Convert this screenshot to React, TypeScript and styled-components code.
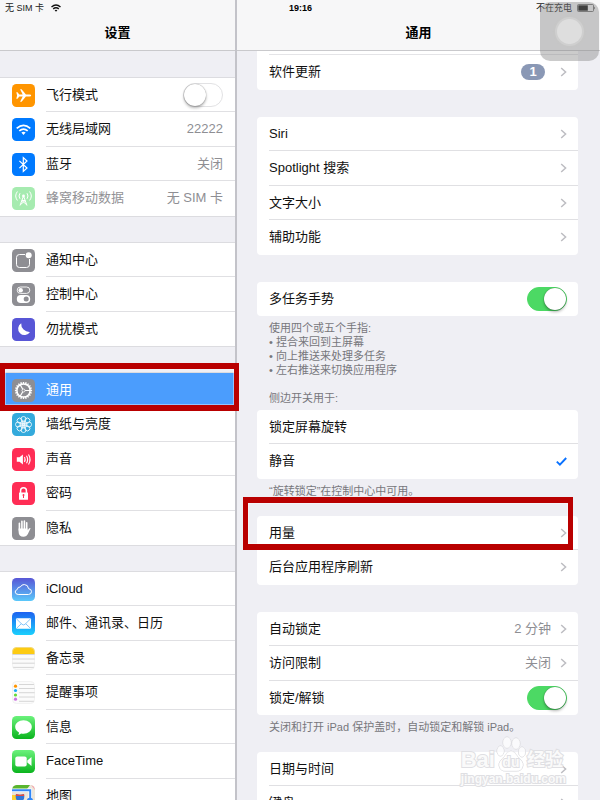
import React from "react";
import styled, { createGlobalStyle, css } from "styled-components";

const GlobalStyle = createGlobalStyle`
  *, *::before, *::after { box-sizing: border-box; }
  body {
    margin: 0;
    background: #efeff4;
    color: #111;
    font-family: "Liberation Sans", "Noto Sans CJK SC", sans-serif;
    font-size: 13px;
    line-height: 20px;
  }
`;

const Page = styled.div`
  position: relative;
  display: flex;
  flex-direction: column;
  height: 100vh;
  overflow: hidden;
`;

const StatusBar = styled.header`
  display: grid;
  grid-template-columns: 1fr auto 1fr;
  align-items: center;
  height: 16px;
  flex: none;
  padding: 0 4px 0 5px;
  font-size: 9px;
  line-height: 16px;
  color: #222;
  background: linear-gradient(#c3c3c9, #c3c3c9) calc(100% * 47 / 120 + 1px) 0 / 2px 100% no-repeat #f7f7f8;
`;

const StatusGroup = styled.div<{ $end?: boolean }>`
  display: flex;
  align-items: center;
  gap: ${(p) => (p.$end ? 5 : 7)}px;
  justify-content: ${(p) => (p.$end ? "flex-end" : "flex-start")};
`;

const Clock = styled.time`
  font-weight: 700;
  color: #000;
`;

const Columns = styled.div`
  display: grid;
  grid-template-columns: minmax(0, 47fr) minmax(0, 73fr);
  flex: 1;
  min-height: 0;
`;

const Column = styled.div<{ $divided?: boolean }>`
  display: flex;
  flex-direction: column;
  min-height: 0;
  ${(p) => p.$divided && css`border-left: 2px solid #c3c3c9;`}
`;

const Title = styled.h1`
  flex: none;
  height: 35px;
  margin: 0;
  border-bottom: 1px solid #c9c9cc;
  background: #f7f7f8;
  color: #000;
  font-size: 13px;
  font-weight: 700;
  line-height: 34px;
  text-align: center;
`;

const Scroller = styled.div<{ $inset?: boolean }>`
  flex: 1;
  min-height: 0;
  overflow-y: auto;
  scrollbar-width: none;
  padding: ${(p) => (p.$inset ? "0 22px 0 20px" : "27px 0 0")};
`;

const Group = styled.ul<{ $card?: boolean; $gap?: number; $open?: boolean }>`
  list-style: none;
  margin: 0 0 ${(p) => p.$gap ?? 27}px;
  padding: 0;
  background: #fff;
  ${(p) =>
    p.$card
      ? css`border-radius: ${p.$open ? "0 0 4px 4px" : "4px"}; overflow: hidden;`
      : css`box-shadow: 0 -1px 0 #dcdce0, 0 1px 0 #dcdce0;`}
`;

const Item = styled.li`
  height: 34px;
  &:nth-child(even) { height: 35px; }
  &:last-child > * > *:last-child { border-bottom-color: transparent; }
`;

const Slice = styled.li`
  height: 4px;
  margin-left: 12px;
  border-bottom: 1px solid #e4e4e7;
`;

const rowBase = css`
  display: flex;
  height: 100%;
  padding-left: 12px;
  color: inherit;
  text-decoration: none;
  cursor: pointer;
`;

const RowLink = styled.a<{ $active?: boolean; $dim?: boolean }>`
  ${rowBase}
  ${(p) => p.$active && css`background: #4b9dfd; color: #fff;`}
  ${(p) => p.$dim && css`color: #929296;`}
`;

const RowLabel = styled.label`
  ${rowBase}
`;

const IconBox = styled.span`
  display: flex;
  align-items: center;
  flex: none;
  width: 34px;
  svg { display: block; }
`;

const RowBody = styled.span<{ $card?: boolean; $plain?: boolean }>`
  display: flex;
  align-items: center;
  flex: 1;
  min-width: 0;
  padding-right: ${(p) => (p.$card ? 11 : 12)}px;
  border-bottom: 1px solid ${(p) => (p.$plain ? "transparent" : "#e0e0e3")};
  white-space: nowrap;
`;

const Text = styled.span`
  flex: 1;
`;

const Value = styled.span`
  color: #8e8e93;
`;

const Badge = styled.span`
  width: 24px;
  margin-right: 6px;
  border-radius: 8px;
  background: #8a98b5;
  color: #fff;
  font-size: 13px;
  font-weight: 700;
  line-height: 16px;
  text-align: center;
`;

const ChevronIcon = styled.svg`
  display: block;
  flex: none;
  margin-left: 9px;
`;

const Switch = styled.input`
  appearance: none;
  position: relative;
  flex: none;
  width: 40px;
  height: 24px;
  margin: 0;
  border: 1px solid #e2e2e4;
  border-radius: 12px;
  background: #fff;
  cursor: pointer;
  &::after {
    content: "";
    position: absolute;
    top: 0;
    left: 0;
    width: 22px;
    height: 22px;
    border-radius: 50%;
    background: #fff;
    box-shadow: 0 0 1px rgba(0, 0, 0, 0.5), 0 2px 3px rgba(0, 0, 0, 0.3);
  }
  &:checked {
    border-color: #4cd964;
    background: #4cd964;
  }
  &:checked::after { left: 16px; }
`;

const HiddenRadio = styled.input`
  appearance: none;
  width: 0;
  height: 0;
  margin: 0;
  & + svg { visibility: hidden; }
  &:checked + svg { visibility: visible; }
`;

const Note = styled.p<{ $gap?: number }>`
  margin: 0 12px ${(p) => p.$gap ?? 18}px;
  padding-top: 5px;
  color: #77777c;
  font-size: 11px;
  line-height: 14px;
  white-space: pre-line;
`;

const GroupHeading = styled.h2`
  margin: 0 12px 5px;
  color: #77777c;
  font-size: 11px;
  font-weight: 400;
  line-height: 14px;
`;

const Highlight = styled.div<{ $x: number; $y: number; $w: number; $h: number }>`
  position: absolute;
  left: ${(p) => p.$x}px;
  top: ${(p) => p.$y}px;
  width: ${(p) => p.$w}px;
  height: ${(p) => p.$h}px;
  border: 6px solid #b90000;
  border-left-width: 5px;
  border-right-width: 5px;
  box-shadow: inset 0 0 0 1px rgba(255, 255, 255, 0.4);
  pointer-events: none;
`;

const AssistiveTouch = styled.button`
  position: absolute;
  top: 2px;
  right: 1px;
  display: grid;
  place-items: center;
  width: 59px;
  height: 59px;
  padding: 0;
  border: 0;
  border-radius: 10px;
  background: rgba(130, 130, 130, 0.42);
  &::before {
    content: "";
    width: 25px;
    height: 25px;
    border-radius: 50%;
    background: #dedede;
    box-shadow: 0 0 0 2px #cfcfcf, 0 0 0 4px #c6c6c6;
  }
`;

const Watermark = styled.div`
  position: absolute;
  right: 34px;
  bottom: 14px;
  color: #fafafa;
  font-weight: 700;
  pointer-events: none;
  -webkit-text-stroke: 2px #dfdfe3;
  paint-order: stroke fill;
`;

const Brand = styled.div`
  display: flex;
  align-items: flex-end;
  font-size: 22px;
  line-height: 24px;
`;

const Paw = styled.span`
  display: grid;
  width: 32px;
  height: 36px;
  svg { grid-area: 1 / 1; }
  span {
    grid-area: 1 / 1;
    place-self: end center;
    font-size: 14px;
    line-height: 20px;
  }
`;

const BrandChinese = styled.span`
  font-size: 18px;
`;

const Site = styled.div`
  font-size: 12px;
  line-height: 14px;
  text-align: center;
`;

const Chevron = () => (
  <ChevronIcon width="7" height="10" viewBox="0 0 7 10" aria-hidden="true">
    <path d="M1.2 1 5.6 5 1.2 9" fill="none" stroke="#bdbdc2" strokeWidth="1.5" />
  </ChevronIcon>
);

const Wifi = () => (
  <svg width="10" height="8" viewBox="0 0 10 8" aria-label="Wi-Fi">
    <g fill="none" stroke="#111" strokeWidth="1.4">
      <path d="M.5 3Q5-1 9.500 3" />
      <path d="M2.200 4.900Q5 2.500 7.800 4.900" />
    </g>
    <path d="M3.600 6.200Q5 5.100 6.400 6.200L5 7.800z" fill="#111" />
  </svg>
);

const Battery = () => (
  <svg width="19" height="8" viewBox="0 0 19 8" aria-label="电池">
    <rect x=".5" y=".5" width="16" height="7" rx="1" fill="none" stroke="#555" strokeWidth=".8" />
    <rect x="1.300" y="1.300" width="9.500" height="5.400" fill="#111" />
    <path d="M17.300 2.500q1.500 1.500 0 3z" fill="#222" />
  </svg>
);

const Check = () => (
  <svg width="11" height="9" viewBox="0 0 11 9" aria-hidden="true">
    <path d="M.8 4.600 3.900 7.600 10.200 1" fill="none" stroke="#0a72ff" strokeWidth="1.900" />
  </svg>
);

const spokes = (n: number) => Array.from({ length: n }, (_, i) => (360 / n) * i);

const glyphs: Record<string, { fill: string; art: React.ReactNode }> = {
  plane: {
    fill: "#ff9500",
    art: (
      <path
        fill="#fff"
        d="M4.300 8.200h1.200l1.800 2.300h3.400L8.100 5.200h1.500l4.300 5.300h3.600q1.700.2 1.700 1t-1.700 1h-3.600l-4.300 5.300H8.100l2.600-5.300H7.300l-1.800 2.300H4.300l.8-3.300z"
      />
    ),
  },
  wifi: {
    fill: "#007aff",
    art: (
      <g fill="none" stroke="#fff" strokeWidth="1.700">
        <path d="M4.700 10.300Q11.500 4.500 18.300 10.300" />
        <path d="M7.300 12.900Q11.500 9.300 15.700 12.900" />
        <path d="M9.400 14.600Q11.500 13 13.600 14.600L11.500 17z" fill="#fff" stroke="none" />
      </g>
    ),
  },
  bluetooth: {
    fill: "#007aff",
    art: <path d="M7.400 7.900 15 15l-3.700 3.400V4.600L15 8l-7.600 7.100" fill="none" stroke="#fff" strokeWidth="1.200" />,
  },
  cellular: {
    fill: "#a6ebb0",
    art: (
      <g fill="none" stroke="#fff" strokeWidth="1">
        <path d="M5.400 4.500q-3.400 4.500 0 9M8 6.200q-2 2.800 0 5.600M17.600 4.500q3.400 4.500 0 9M15 6.200q2 2.800 0 5.600" />
        <path d="M11.500 9 8 18.500M11.500 9 15 18.500M9.800 13.500h3.400l-4.600 4M9.800 13.500l4.600 4" />
        <circle cx="11.500" cy="9" r="1.400" fill="#fff" stroke="none" />
      </g>
    ),
  },
  notices: {
    fill: "#8e8e93",
    art: (
      <>
        <path d="M13 5.500H7.500q-3 0-3 3v7q0 3 3 3h7q3 0 3-3V10" fill="none" stroke="#fff" strokeWidth="1" />
        <circle cx="16.700" cy="6.300" r="3" fill="#fff" />
      </>
    ),
  },
  control: {
    fill: "#8e8e93",
    art: (
      <>
        <rect x="5.200" y="4" width="12.600" height="6.400" rx="3.200" fill="none" stroke="#fff" strokeWidth=".9" />
        <circle cx="8.700" cy="7.200" r="2.200" fill="#fff" />
        <rect x="4.800" y="12" width="13.400" height="8" rx="4" fill="#fff" />
        <circle cx="14.200" cy="16" r="2.500" fill="#8e8e93" />
      </>
    ),
  },
  moon: {
    fill: "#5856d6",
    art: <path fill="#fff" d="M9.200 5.200a6.400 6.400 0 1 0 8.800 8.800A8.200 8.200 0 0 1 9.200 5.200z" />,
  },
  gear: {
    fill: "#8e8e93",
    art: (
      <g fill="none" stroke="#fff">
        <circle cx="11.500" cy="11.500" r="6.600" strokeWidth="1.500" />
        {spokes(20).map((a) => (
          <path key={a} d="M11.500 2.900v2" strokeWidth="1.400" transform={`rotate(${a} 11.500 11.500)`} />
        ))}
        {[90, 210, 330].map((a) => (
          <path key={a} d="M11.500 11.500V5" strokeWidth="1.100" transform={`rotate(${a} 11.500 11.500)`} />
        ))}
        <circle cx="11.500" cy="11.500" r="1.500" fill="#8e8e93" strokeWidth=".8" />
      </g>
    ),
  },
  flower: {
    fill: "#34aadc",
    art: (
      <g fill="none" stroke="#fff" strokeWidth=".8">
        {spokes(8).map((a) => (
          <g key={a} transform={`rotate(${a} 11.500 11.500)`}>
            <circle cx="11.500" cy="6" r="2.500" />
            <ellipse cx="11.500" cy="9.400" rx="1.100" ry="1.500" strokeWidth=".6" />
          </g>
        ))}
        <circle cx="11.500" cy="11.500" r="1.500" />
      </g>
    ),
  },
  sound: {
    fill: "#ff2d55",
    art: (
      <g fill="none" stroke="#fff" strokeWidth="1.100">
        <path d="M4.800 9.200h2.700l3.400-2.600v9.800l-3.400-2.600H4.800z" fill="#fff" stroke="none" />
        <path d="M12.500 9q1.300 2.500 0 5M14.500 7.700q2.200 3.800 0 7.600M16.500 6.500q3.100 5 0 10" />
      </g>
    ),
  },
  lock: {
    fill: "#ff2d55",
    art: (
      <>
        <path d="M8.600 11V8.600q0-2.800 2.900-2.800t2.900 2.800V11" fill="none" stroke="#fff" strokeWidth="1.500" />
        <rect x="7" y="10.500" width="9" height="7.300" rx=".5" fill="#fff" />
        <path d="M11.500 12a1.100 1.100 0 0 1 .5 2v2h-1v-2a1.100 1.100 0 0 1 .5-2z" fill="#ff2d55" />
      </>
    ),
  },
  hand: {
    fill: "#8e8e93",
    art: (
      <g fill="none" stroke="#fff" strokeLinecap="round">
        <path d="M7.400 6.200v7M9.900 4.400v8M12.400 4.100v8M14.700 5.800v8" strokeWidth="1.600" />
        <path d="M6.600 11.500h8.900v1.900l1.500-2q1-.9 1.600-.2l-2.500 5.300q-1.600 3.300-4.500 3.300-5 0-5-5z" fill="#fff" stroke="none" />
      </g>
    ),
  },
  cloud: {
    fill: "url(#cloud-sky)",
    art: (
      <path
        d="M6.200 16.500h10.300q3-.3 3-2.900t-2.900-2.900q-.4-4-4.300-4.200-2.800 0-4 2.500-2.800-.3-2.900 2.400-2.300.8-2.200 2.700.3 2.200 3 2.400z"
        fill="none"
        stroke="#fff"
        strokeWidth="1"
      />
    ),
  },
  mail: {
    fill: "url(#mail-sky)",
    art: (
      <>
        <rect x="4" y="6.300" width="15" height="10.500" rx="1" fill="#fff" />
        <path d="M4.300 6.700 10 12.300q1.500 1.300 3 0l5.700-5.600M4.500 16.400l4.800-4.700M18.500 16.400l-4.800-4.700" fill="none" stroke="#66b8f8" strokeWidth=".8" />
      </>
    ),
  },
  notes: {
    fill: "#fbfbfb",
    art: (
      <>
        <path d="M0 7V5q0-5 5-5h13q5 0 5 5v2z" fill="#fdcb12" />
        <path d="M0 7.500h23M0 12h23M0 16.200h23M1 20.400h21" stroke="#d6d6d6" />
      </>
    ),
  },
  reminders: {
    fill: "#fbfbfb",
    art: (
      <>
        <path d="M7 3.500h15M7 7.500h16M7 11.700h16M7 16h16M7 20.300h15" stroke="#d6d6d6" />
        <circle cx="3.500" cy="5.200" r="1.600" fill="#ff9500" />
        <circle cx="3.500" cy="9.500" r="1.600" fill="#1badf8" />
        <circle cx="3.500" cy="14" r="1.600" fill="#63da38" />
        <circle cx="3.500" cy="18.200" r="1.600" fill="#cc73e1" />
      </>
    ),
  },
  messages: {
    fill: "url(#leaf)",
    art: (
      <path
        fill="#fff"
        d="M11.500 4.300c4.700 0 8.300 3 8.300 6.700s-3.600 6.700-8.300 6.700q-1.300 0-2.400-.2-1.300 1.200-3.100 1.300 1.100-1.100 1-2.300Q3.200 14.400 3.200 11c0-3.700 3.600-6.700 8.300-6.700z"
      />
    ),
  },
  facetime: {
    fill: "url(#leaf)",
    art: (
      <>
        <rect x="3.300" y="6.400" width="11.400" height="10.200" rx="2" fill="#fff" />
        <path d="M15.300 10.600 19.500 7v9l-4.200-3.600z" fill="#fff" />
      </>
    ),
  },
  maps: {
    fill: "#ece6da",
    art: (
      <>
        <path d="M0 4.500Q.5 0 5 0h13l-3 4z" fill="#59b52e" />
        <path d="M19 0q4 1 4 5z" fill="#f5a0aa" />
        <path d="M0 10h9l4 13H5q-5 0-5-5z" fill="#fcd232" />
        <path d="M0 5.300h18.200V23" fill="none" stroke="#fff" strokeWidth="3.400" />
        <path d="M0 5.300h18.200V15" fill="none" stroke="#2f86f6" strokeWidth="2" />
        <path d="M4 9q4 1.500 8 0 1.500 6-4 9-5.500-3-4-9z" fill="#2f77d8" />
        <path d="M4 9q4 1.500 8 0l.2 2H3.800z" fill="#e84b3c" />
        <circle cx="18" cy="16" r="3.200" fill="#2f86f6" />
      </>
    ),
  },
};

const Glyph = ({ name }: { name: string }) => (
  <svg width="23" height="23" viewBox="0 0 23 23" aria-hidden="true">
    <defs>
      <linearGradient id="cloud-sky" x2="0" y2="1">
        <stop stopColor="#5856d6" />
        <stop offset="1" stopColor="#5ac8fa" />
      </linearGradient>
      <linearGradient id="mail-sky" x2="0" y2="1">
        <stop stopColor="#1d62f0" />
        <stop offset="1" stopColor="#1ad0fd" />
      </linearGradient>
      <linearGradient id="leaf" x2="0" y2="1">
        <stop stopColor="#6bf27c" />
        <stop offset="1" stopColor="#0bb41e" />
      </linearGradient>
      <clipPath id="tile">
        <rect width="23" height="23" rx="4.500" />
      </clipPath>
    </defs>
    <g clipPath="url(#tile)">
      <rect width="23" height="23" fill={glyphs[name].fill} />
      {glyphs[name].art}
    </g>
    {(name === "notes" || name === "reminders") && (
      <rect x=".5" y=".5" width="22" height="22" rx="4" fill="none" stroke="#e9e9e9" strokeWidth=".5" />
    )}
  </svg>
);

type NavEntry = { icon: string; label: string; value?: string; toggle?: boolean; active?: boolean; dim?: boolean };

const navigation: NavEntry[][] = [
  [
    { icon: "plane", label: "飞行模式", toggle: true },
    { icon: "wifi", label: "无线局域网", value: "22222" },
    { icon: "bluetooth", label: "蓝牙", value: "关闭" },
    { icon: "cellular", label: "蜂窝移动数据", value: "无 SIM 卡", dim: true },
  ],
  [
    { icon: "notices", label: "通知中心" },
    { icon: "control", label: "控制中心" },
    { icon: "moon", label: "勿扰模式" },
  ],
  [
    { icon: "gear", label: "通用", active: true },
    { icon: "flower", label: "墙纸与亮度" },
    { icon: "sound", label: "声音" },
    { icon: "lock", label: "密码" },
    { icon: "hand", label: "隐私" },
  ],
  [
    { icon: "cloud", label: "iCloud" },
    { icon: "mail", label: "邮件、通讯录、日历" },
    { icon: "notes", label: "备忘录" },
    { icon: "reminders", label: "提醒事项" },
    { icon: "messages", label: "信息" },
    { icon: "facetime", label: "FaceTime" },
    { icon: "maps", label: "地图" },
  ],
];

const NavRow = ({ icon, label, value, toggle, active, dim }: NavEntry) => {
  const content = (
    <>
      <IconBox>
        <Glyph name={icon} />
      </IconBox>
      <RowBody $plain={active}>
        <Text>{label}</Text>
        {value && <Value>{value}</Value>}
        {toggle && <Switch type="checkbox" />}
      </RowBody>
    </>
  );
  return (
    <Item>
      {toggle ? (
        <RowLabel>{content}</RowLabel>
      ) : (
        <RowLink href="#" $active={active} $dim={dim} aria-current={active ? "page" : undefined}>
          {content}
        </RowLink>
      )}
    </Item>
  );
};

const DetailRow = ({ label, value, badge }: { label: string; value?: string; badge?: string }) => (
  <Item>
    <RowLink href="#">
      <RowBody $card>
        <Text>{label}</Text>
        {value && <Value>{value}</Value>}
        {badge && <Badge>{badge}</Badge>}
        <Chevron />
      </RowBody>
    </RowLink>
  </Item>
);

const SwitchRow = ({ label }: { label: string }) => (
  <Item>
    <RowLabel>
      <RowBody $card>
        <Text>{label}</Text>
        <Switch type="checkbox" defaultChecked />
      </RowBody>
    </RowLabel>
  </Item>
);

const ChoiceRow = ({ label, checked }: { label: string; checked?: boolean }) => (
  <Item>
    <RowLabel>
      <RowBody $card>
        <Text>{label}</Text>
        <HiddenRadio type="radio" name="side-switch" defaultChecked={checked} />
        <Check />
      </RowBody>
    </RowLabel>
  </Item>
);

export default function App() {
  return (
    <>
      <GlobalStyle />
      <Page>
        <StatusBar>
          <StatusGroup>
            <span>无 SIM 卡</span>
            <Wifi />
          </StatusGroup>
          <Clock>19:16</Clock>
          <StatusGroup $end>
            <span>不在充电</span>
            <Battery />
          </StatusGroup>
        </StatusBar>
        <Columns>
          <Column as="nav">
            <Title>设置</Title>
            <Scroller>
              {navigation.map((rows) => (
                <Group key={rows[0].icon}>
                  {rows.map((row) => (
                    <NavRow key={row.icon} {...row} />
                  ))}
                </Group>
              ))}
            </Scroller>
          </Column>
          <Column as="main" $divided>
            <Title>通用</Title>
            <Scroller $inset>
              <Group $card $open>
                <Slice aria-hidden="true" />
                <DetailRow label="软件更新" badge="1" />
              </Group>
              <Group $card>
                <DetailRow label="Siri" />
                <DetailRow label="Spotlight 搜索" />
                <DetailRow label="文字大小" />
                <DetailRow label="辅助功能" />
              </Group>
              <Group $card $gap={0}>
                <SwitchRow label="多任务手势" />
              </Group>
              <Note $gap={14}>
                {"使用四个或五个手指:\n• 捏合来回到主屏幕\n• 向上推送来处理多任务\n• 左右推送来切换应用程序"}
              </Note>
              <GroupHeading>侧边开关用于:</GroupHeading>
              <Group $card $gap={0}>
                <ChoiceRow label="锁定屏幕旋转" />
                <ChoiceRow label="静音" checked />
              </Group>
              <Note>“旋转锁定”在控制中心中可用。</Note>
              <Group $card>
                <DetailRow label="用量" />
                <DetailRow label="后台应用程序刷新" />
              </Group>
              <Group $card $gap={0}>
                <DetailRow label="自动锁定" value="2 分钟" />
                <DetailRow label="访问限制" value="关闭" />
                <SwitchRow label="锁定/解锁" />
              </Group>
              <Note>关闭和打开 iPad 保护盖时，自动锁定和解锁 iPad。</Note>
              <Group $card $gap={0}>
                <DetailRow label="日期与时间" />
                <DetailRow label="键盘" />
              </Group>
            </Scroller>
          </Column>
        </Columns>
        <Highlight $x={0} $y={363} $w={239} $h={48} />
        <Highlight $x={243} $y={497} $w={330} $h={53} />
        <AssistiveTouch type="button" aria-label="AssistiveTouch" />
        <Watermark>
          <Brand>
            <span>Bai</span>
            <Paw>
              <svg width="32" height="36" viewBox="0 0 30 36" aria-hidden="true">
                <g fill="#fff" fillOpacity=".7" stroke="#d6d6da" strokeWidth="1">
                  <ellipse cx="4.500" cy="15" rx="3.500" ry="5" />
                  <ellipse cx="11" cy="6.500" rx="4" ry="5.500" />
                  <ellipse cx="20" cy="7.500" rx="4" ry="5.500" />
                  <ellipse cx="26" cy="16" rx="3.500" ry="5" />
                  <path d="M15 15q4 0 6.500 5.500 6 5 5.500 9-1 6-7 5.500h-10q-6 .5-7-5.500-.5-4 5.500-9Q11 15 15 15z" />
                </g>
              </svg>
              <span>du</span>
            </Paw>
            <BrandChinese>经验</BrandChinese>
          </Brand>
          <Site>jingyan.baidu.com</Site>
        </Watermark>
      </Page>
    </>
  );
}
